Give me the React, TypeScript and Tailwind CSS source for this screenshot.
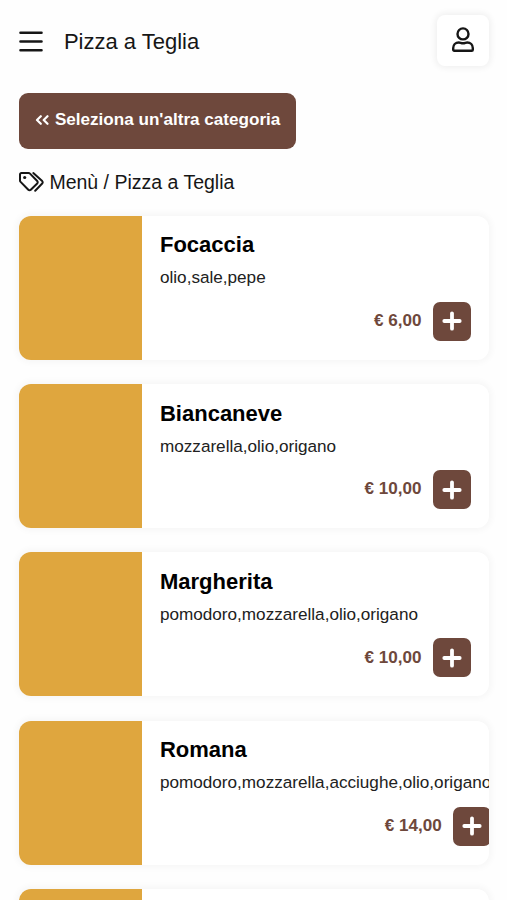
import React from 'react';

interface Pizza {
  name: string;
  ingredients: string;
  price: string;
}

interface IconProps {
  className?: string;
}

const pizzas: Pizza[] = [
  { name: 'Focaccia', ingredients: 'olio,sale,pepe', price: '6,00' },
  { name: 'Biancaneve', ingredients: 'mozzarella,olio,origano', price: '10,00' },
  { name: 'Margherita', ingredients: 'pomodoro,mozzarella,olio,origano', price: '10,00' },
  { name: 'Romana', ingredients: 'pomodoro,mozzarella,acciughe,olio,origano', price: '14,00' },
];

const MenuIcon = ({ className }: IconProps) => (
  <svg viewBox="0 0 24 21" fill="none" stroke="currentColor" strokeWidth="2.6" strokeLinecap="round" className={className}>
    <path d="M1.5 1.8h21M1.5 10.5h21M1.5 19.2h21" />
  </svg>
);

const UserIcon = ({ className }: IconProps) => (
  <svg viewBox="0 0 22 25" fill="none" stroke="currentColor" strokeWidth="2.4" strokeLinejoin="round" className={className}>
    <circle cx="11" cy="6.9" r="5.5" />
    <path d="M6.800 15.500c1.500 0 2.200.8 4.200.8s2.700-.8 4.200-.8c3.300 0 5.600 2.600 5.600 5.600v1.700c0 .6-.4 1-1 1H2.200c-.6 0-1-.4-1-1v-1.700c0-3 2.300-5.600 5.600-5.600z" />
  </svg>
);

const TagsIcon = ({ className }: IconProps) => (
  <svg viewBox="0 0 25 20" fill="none" stroke="currentColor" strokeWidth="2" strokeLinejoin="round" strokeLinecap="round" className={className}>
    <path d="M1 2.4v6c0 .6.2 1.1.6 1.5l7.700 7.800c.7.7 1.800.7 2.500 0l6.400-6.200c.7-.7.7-1.800 0-2.500L11 1.600c-.4-.4-.9-.6-1.500-.6H2.400C1.600 1 1 1.600 1 2.400z" />
    <path d="M14.300 1.100l8.900 8c.7.7.7 1.700 0 2.400l-7 7.200" />
    <circle cx="5.7" cy="5.5" r="1.6" fill="currentColor" stroke="none" />
  </svg>
);

const BackIcon = ({ className }: IconProps) => (
  <svg viewBox="0 0 14 12" fill="none" stroke="currentColor" strokeWidth="2.2" strokeLinejoin="round" strokeLinecap="round" className={className}>
    <path d="M5.800 2.200L2 6l3.800 3.800M12.500 2.200L8.700 6l3.800 3.800" />
  </svg>
);

const PlusIcon = ({ className }: IconProps) => (
  <svg viewBox="0 0 20 20" fill="none" stroke="currentColor" strokeWidth="3.8" strokeLinecap="round" className={className}>
    <path d="M10 2.300v15.400M2.300 10h15.400" />
  </svg>
);

const PizzaCard: React.FC<{ pizza?: Pizza }> = ({ pizza }) => (
  <article className="flex h-36 shrink-0 overflow-hidden rounded-xl bg-white shadow-[0_0_6px_3px_rgba(0,0,0,0.03)]">
    <div className="w-[122.4px] shrink-0 bg-[#dfa63e]" />
    {/* min-w-fit keeps long ingredient lists on one line, clipped by the card */}
    {pizza && (
      <div className="flex min-w-fit grow flex-col pt-[16.5px] pr-[18px] pl-[18.2px]">
        <h2 className="text-[22px] leading-[26px] font-bold text-black">{pizza.name}</h2>
        <p className="mt-[9px] text-[17.14px] leading-5 whitespace-nowrap text-[#212121]">{pizza.ingredients}</p>
        <div className="mt-[14.5px] flex items-center justify-end gap-[11px]">
          <span className="-mt-px text-[17.1px] font-bold text-[#6e483c]">€ {pizza.price}</span>
          <button className="flex h-[39px] w-[38.5px] items-center justify-center rounded-[7px] bg-[#6e483c] text-white" aria-label="Aggiungi">
            <PlusIcon className="size-5" />
          </button>
        </div>
      </div>
    )}
  </article>
);

const App: React.FC = () => (
  <div className="h-[900px] overflow-hidden bg-[#fefefe] pr-[18px] pl-[19.4px] font-['Liberation_Sans',Arial,sans-serif] text-[#161616]">
    <header className="flex items-center pt-[15px]">
      <button aria-label="Menu">
        <MenuIcon className="mt-px h-[21px] w-6" />
      </button>
      <h1 className="mt-0.5 ml-[20.5px] grow text-[22px] leading-[26px]">Pizza a Teglia</h1>
      <button className="flex h-[51px] w-[52px] items-center justify-center rounded-lg bg-white shadow-[0_0_6px_2px_rgba(0,0,0,0.06)]" aria-label="Account">
        <UserIcon className="-mt-0.5 h-[25px] w-[22px]" />
      </button>
    </header>

    <button className="mt-[27px] flex h-[55.5px] w-[277px] items-center rounded-[9px] bg-[#6e483c] pb-px pl-4 text-[17.1px] font-bold text-white">
      <BackIcon className="mr-[5.5px] h-3 w-3.5" />
      Seleziona un'altra categoria
    </button>

    <div className="mt-[21.5px] flex items-center text-[19.5px] leading-6">
      <TagsIcon className="mr-[5px] h-5 w-[25px]" />
      Menù / Pizza a Teglia
    </div>

    <main className="mt-[21.8px] flex flex-col gap-[24.3px]">
      {pizzas.map((pizza) => (
        <PizzaCard key={pizza.name} pizza={pizza} />
      ))}
      <PizzaCard />
    </main>
  </div>
);

export default App;
